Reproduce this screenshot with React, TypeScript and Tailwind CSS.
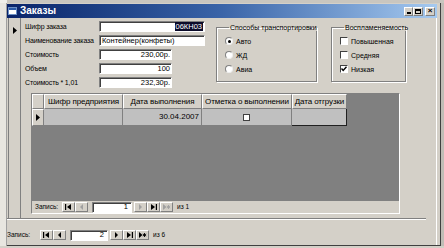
import React from "react";

const sunken =
  "border border-t-[#808080] border-l-[#808080] border-b-white border-r-white";
const raised =
  "border border-t-white border-l-white border-b-[#808080] border-r-[#808080]";

function TextBox({ children, w, align = "right" }: { children?: React.ReactNode; w: string; align?: string }) {
  return (
    <div
      className={`${w} shrink-0 h-[11px] bg-white ${sunken} shadow-[inset_1px_1px_0_#404040] flex items-center ${
        align === "right" ? "justify-end pr-[1px]" : "justify-start pl-[2px]"
      } text-[7.5px] leading-none text-black whitespace-nowrap overflow-hidden`}
    >
      {children}
    </div>
  );
}

function Radio({ checked }: { checked?: boolean }) {
  return (
    <div className="w-[8px] h-[8px] shrink-0 rounded-full bg-white border border-t-[#808080] border-l-[#808080] border-b-[#eeeeee] border-r-[#eeeeee] flex items-center justify-center">
      {checked && <div className="w-[3px] h-[3px] rounded-full bg-black" />}
    </div>
  );
}

function Check({ checked }: { checked?: boolean }) {
  return (
    <div className="w-[8px] h-[8px] shrink-0 bg-white border border-t-[#404040] border-l-[#404040] border-b-white border-r-white flex items-center justify-center">
      {checked && (
        <svg width="6" height="6" viewBox="0 0 6 6">
          <path d="M0.5 2.5 L2.2 4.5 L5.5 0.8" stroke="#000" strokeWidth="1.4" fill="none" />
        </svg>
      )}
    </div>
  );
}

type Glyph = "first" | "prev" | "next" | "last" | "new";

function NavBtn({ g, disabled }: { g: Glyph; disabled?: boolean }) {
  const c = disabled ? "#a0a0a0" : "#000";
  return (
    <div className={`w-[13px] h-[10px] shrink-0 bg-[#d4d0c8] ${raised} flex items-center justify-center`}>
      <svg width="9" height="6" viewBox="0 0 9 6">
        {g === "first" && (
          <>
            <rect x="1" y="0" width="1.2" height="6" fill={c} />
            <path d="M7 0 L3 3 L7 6 Z" fill={c} />
          </>
        )}
        {g === "prev" && <path d="M6 0 L3 3 L6 6 Z" fill={c} />}
        {g === "next" && <path d="M3 0 L6 3 L3 6 Z" fill={c} />}
        {g === "last" && (
          <>
            <path d="M2 0 L6 3 L2 6 Z" fill={c} />
            <rect x="6.8" y="0" width="1.2" height="6" fill={c} />
          </>
        )}
        {g === "new" && (
          <>
            <path d="M1 0 L4.5 3 L1 6 Z" fill={c} />
            <path d="M6.5 1 L6.5 5 M4.8 2 L8.2 4 M8.2 2 L4.8 4" stroke={c} strokeWidth="0.9" />
          </>
        )}
      </svg>
    </div>
  );
}

function NavBar({ value, total, sub }: { value: string; total: string; sub?: boolean }) {
  return (
    <div className="flex items-center h-[12px] text-[6.5px] leading-none text-black">
      <span className={`${sub ? "w-[27px]" : "w-[33px]"} shrink-0`}>Запись:</span>
      <NavBtn g="first" />
      <NavBtn g="prev" disabled={sub} />
      <div
        className={`ml-[4px] ${sub ? "w-[40px]" : "w-[38px]"} shrink-0 h-[11px] bg-white ${sunken} shadow-[inset_1px_1px_0_#404040] flex items-center justify-end pr-[3px] text-[7.5px] text-black`}
      >
        {value}
      </div>
      <div className="ml-[2px] flex">
        <NavBtn g="next" disabled={sub} />
        <NavBtn g="last" />
        <NavBtn g="new" disabled={sub} />
      </div>
      <span className="ml-[4px] whitespace-nowrap">из {total}</span>
    </div>
  );
}

function Arrow() {
  return (
    <svg width="4" height="7" viewBox="0 0 4 7">
      <path d="M0 0 L4 3.5 L0 7 Z" fill="#000" />
    </svg>
  );
}

export default function App() {
  const rows: [string, string, string, string?][] = [
    ["Шифр заказа", "w-[106px]", "sel"],
    ["Наименование заказа", "w-[106px]", "Контейнер(конфеты)", "left"],
    ["Стоимость", "w-[73px]", "230,00р."],
    ["Объем", "w-[73px]", "100"],
    ["Стоимость * 1,01", "w-[73px]", "232,30р."],
  ];
  const fieldset =
    "min-w-0 shrink-0 mt-[6px] h-[58px] border border-[#808080] shadow-[inset_1px_1px_0_#fff,1px_1px_0_#fff] pl-[8px] pt-[6px] text-[7px] leading-none";
  return (
    <div className="w-[444px] h-[248px] bg-[#d4d0c8] overflow-hidden font-['Liberation_Sans',Arial,sans-serif] text-black flex flex-col">
      <div className="h-[3px] bg-[#c9c6bf] flex shrink-0">
        <div className="w-[7px] bg-[#f0efea]" />
      </div>
      <div className="flex">
        <div className="w-[7px] shrink-0 bg-[#e8e6e0] border-r border-[#a0a0a0]" />
        <div className="w-[434px] shrink-0 h-[243px] bg-[#d4d0c8] border-r border-r-[#404040] border-b border-b-[#404040] flex flex-col">
          {/* title bar */}
          <div className="h-[14px] mt-[1px] mr-[3px] bg-linear-to-r from-[#0a246a] via-[#3a64a8] to-[#a6caf0] flex items-center pl-[1px]">
            <div className="w-[9px] h-[8px] bg-white border border-[#6b8fc4] flex flex-col">
              <div className="h-[2px] bg-[#2a5aa8]" />
            </div>
            <span className="ml-[3px] text-[10px] font-bold text-white leading-none">Заказы</span>
            <div className="ml-auto flex items-center mr-[2px]">
              <div className={`w-[9px] h-[9px] bg-[#d4d0c8] ${raised} flex items-end justify-center pb-[1px]`}>
                <div className="w-[4px] h-[1.5px] bg-black" />
              </div>
              <div className={`w-[10px] h-[9px] bg-[#d4d0c8] ${raised} flex items-center justify-center`}>
                <div className="w-[6px] h-[5px] border border-black border-t-2" />
              </div>
              <div className={`ml-[2px] w-[10px] h-[9px] bg-[#d4d0c8] ${raised} flex items-center justify-center text-[8px] font-bold leading-none`}>
                ×
              </div>
            </div>
          </div>
          {/* body */}
          <div className="flex-1 flex flex-col mr-[3px] border-r border-r-white">
            <div className="h-[201px] flex border-b border-b-[#808080] shadow-[0_1px_0_#fff] mr-[10px]">
              {/* record selector */}
              <div className="w-[13px] shrink-0 ml-[1px] border-l border-l-[#808080] border-r border-r-[#808080] bg-[#d4d0c8] flex flex-col items-center pt-[9px]">
                <Arrow />
              </div>
              {/* detail */}
              <div className="flex-1 min-w-0 flex flex-col">
                <div className="h-[75px] flex">
                  <div className="pl-[4px] pt-[3px] flex flex-col gap-[3px] shrink-0">
                    {rows.map(([label, w, val, align]) => (
                      <div key={label} className="flex items-center h-[11px]">
                        <span className="w-[74px] shrink-0 text-[7px] leading-none whitespace-nowrap tracking-[-0.15px]">{label}</span>
                        <TextBox w={w} align={align}>
                          {val === "sel" ? (
                            <span className="bg-[#0b0b2a] text-white px-[1px] leading-[9px]">06КН03</span>
                          ) : (
                            val
                          )}
                        </TextBox>
                      </div>
                    ))}
                  </div>
                  <fieldset className={`ml-[11px] w-[101px] ${fieldset}`}>
                    <legend className="ml-[4px] px-[1px] whitespace-nowrap">Способы транспортировки</legend>
                    <div className="flex flex-col gap-[6px]">
                      <div className="flex items-center h-[8px]">
                        <Radio checked />
                        <span className="ml-[3px]">Авто</span>
                      </div>
                      <div className="flex items-center h-[8px]">
                        <Radio />
                        <span className="ml-[3px]">ЖД</span>
                      </div>
                      <div className="flex items-center h-[8px]">
                        <Radio />
                        <span className="ml-[3px]">Авиа</span>
                      </div>
                    </div>
                  </fieldset>
                  <fieldset className={`ml-[14px] w-[75px] ${fieldset}`}>
                    <legend className="ml-[4px] px-[1px] whitespace-nowrap">Воспламеняемость</legend>
                    <div className="flex flex-col gap-[6px]">
                      <div className="flex items-center h-[8px]">
                        <Check />
                        <span className="ml-[3px]">Повышенная</span>
                      </div>
                      <div className="flex items-center h-[8px]">
                        <Check />
                        <span className="ml-[3px]">Средняя</span>
                      </div>
                      <div className="flex items-center h-[8px]">
                        <Check checked />
                        <span className="ml-[3px]">Низкая</span>
                      </div>
                    </div>
                  </fieldset>
                </div>
                {/* subform */}
                <div className="ml-[10px] w-[369px] shrink-0 h-[121px] flex flex-col border border-t-[#808080] border-l-[#808080] border-b-white border-r-white">
                  <div className="flex-1 bg-[#808080] flex flex-col">
                    <div className="flex h-[15px] text-[8px] leading-none">
                      <div className={`w-[12px] shrink-0 bg-[#d4d0c8] ${raised} border-r-[#404040] border-b-[#404040]`} />
                      {[
                        ["w-[79px]", "Шифр предприятия"],
                        ["w-[79px]", "Дата выполнения"],
                        ["w-[90px]", "Отметка о выполнении"],
                        ["w-[55px]", "Дата отгрузки"],
                      ].map(([w, t]) => (
                        <div
                          key={t}
                          className={`${w} shrink-0 bg-[#d4d0c8] ${raised} border-r-[#404040] border-b-[#404040] flex items-center justify-center whitespace-nowrap overflow-hidden tracking-[-0.1px]`}
                        >
                          {t}
                        </div>
                      ))}
                    </div>
                    <div className="flex h-[17px] text-[8px] leading-none">
                      <div className={`w-[12px] shrink-0 bg-[#d4d0c8] ${raised} border-r-[#404040] border-b-[#404040] flex items-center justify-center`}>
                        <Arrow />
                      </div>
                      <div className="w-[79px] shrink-0 bg-[#c0c0c0] border-r border-b border-[#808080]" />
                      <div className="w-[79px] shrink-0 bg-[#c0c0c0] border-r border-b border-[#808080] flex items-center justify-end pr-[2px]">
                        30.04.2007
                      </div>
                      <div className="w-[90px] shrink-0 bg-[#c0c0c0] border-r border-b border-[#808080] flex items-center justify-center">
                        <div className="w-[7px] h-[7px] bg-white border border-[#404040]" />
                      </div>
                      <div className="w-[55px] shrink-0 bg-[#c0c0c0] border-r border-b border-[#202020]" />
                    </div>
                  </div>
                  <div className="h-[12px] bg-[#d4d0c8] flex items-center pl-[3px]">
                    <NavBar value="1" total="1" sub />
                  </div>
                </div>
              </div>
            </div>
            {/* main nav */}
            <div className="flex-1 pt-[10px] pl-0">
              <NavBar value="2" total="6" />
            </div>
          </div>
        </div>
        <div className="flex-1 bg-[#c0bdb6]" />
      </div>
    </div>
  );
}
